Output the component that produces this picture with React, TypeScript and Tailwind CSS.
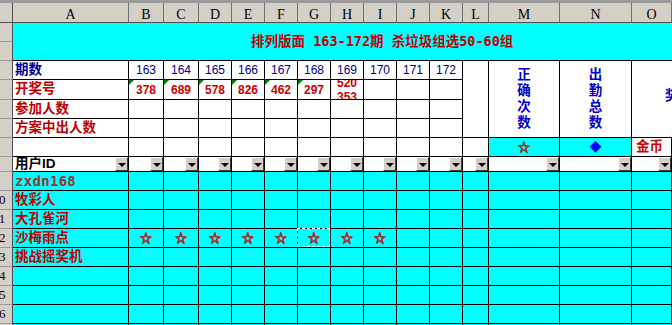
import React from 'react';

const COLS = ['A', 'B', 'C', 'D', 'E', 'F', 'G', 'H', 'I', 'J', 'K', 'L', 'M', 'N', 'O', 'P'];
const NUMS = ['163', '164', '165', '166', '167', '168', '169', '170', '171', '172'];
const OPEN = ['378', '689', '578', '826', '462', '297'];
const NAMES: { name: string; latin?: boolean }[] = [
  { name: 'zxdn168', latin: true },
  { name: '牧彩人' },
  { name: '大孔雀河' },
  { name: '沙梅雨点' },
  { name: '挑战摇奖机' },
  { name: '' },
  { name: '' },
  { name: '' },
  { name: '' },
];

function RowHead({ n }: { n: number }) {
  return (
    <div className="bg-[#d4d0c8] border-r border-b border-r-[#505050] border-b-[#9a9a9a] overflow-hidden">
      {n >= 10 && (
        <div className="w-[26px] -ml-[14px] h-full flex items-center justify-center font-['Liberation_Serif',serif] text-[13px] text-black">
          {n}
        </div>
      )}
    </div>
  );
}

function Cell({ className = '', children }: { className?: string; children?: React.ReactNode }) {
  return <div className={`border-r border-b border-black overflow-hidden min-w-0 relative ${className}`}>{children}</div>;
}

function DropBtn() {
  return (
    <div className="w-[13px] h-[14px] bg-[#d4d0c8] border border-t-white border-l-white border-r-[#404040] border-b-[#404040] flex items-center justify-center shrink-0">
      <div className="w-0 h-0 border-l-[4px] border-r-[4px] border-t-[4px] border-l-transparent border-r-transparent border-t-black mt-[1px]" />
    </div>
  );
}

const label = "pl-[2px] flex items-center text-[13.5px] font-bold whitespace-nowrap";

export default function App() {
  return (
    <div className="w-[672px] h-[325px] overflow-hidden bg-white font-['Liberation_Sans','Noto_Sans_CJK_SC',sans-serif]">
      <div className="h-[3px] bg-[#9a9a9a]" />
      <div className="grid w-max grid-cols-[13px_116px_35px_35px_33px_33px_33px_33px_33px_33px_33px_33px_26px_71px_72px_40px_60px] grid-rows-[20px_19px_19px_19px_20px_19px_19px_19px_15px_19px_19px_19px_19px_19px_19px_19px_19px_19px]">
        {/* header row */}
        <div className="bg-[#d4d0c8] border-r border-b border-r-[#505050] border-b-[#505050]" />
        {COLS.map((c) => (
          <div
            key={c}
            className="bg-[#d4d0c8] border-r border-b border-r-[#707070] border-b-[#505050] overflow-hidden text-center pt-[4px] leading-[16px] text-[14px] text-black font-['Liberation_Serif',serif]"
          >
            {c}
          </div>
        ))}

        {/* rows 1-2: title */}
        <RowHead n={1} />
        <div className="col-span-16 row-span-2 bg-[#00ffff] border-b border-r border-black flex items-center pl-[238px] whitespace-pre text-[13.5px] font-bold text-[#c00000] font-['DejaVu_Sans_Mono','Noto_Sans_CJK_SC',monospace]">
          {'排列版面 163-172期 杀垃圾组选50-60组'}
        </div>
        <RowHead n={2} />

        {/* row 3 */}
        <RowHead n={3} />
        <Cell className={`${label} text-[#000099]`}>期数</Cell>
        {NUMS.map((n) => (
          <Cell key={n} className="flex items-center justify-center text-[12px] text-[#000080]">
            {n}
          </Cell>
        ))}
        <Cell className="row-span-4" />
        <Cell className="row-span-4 flex items-center justify-center">
          <div className="w-[14px] text-center text-[13.5px] leading-[16px] font-bold text-[#0000cc] break-all">正确次数</div>
        </Cell>
        <Cell className="row-span-4 flex items-center justify-center">
          <div className="w-[14px] text-center text-[13.5px] leading-[16px] font-bold text-[#0000cc] break-all">出勤总数</div>
        </Cell>
        <Cell className="col-span-2 row-span-4 flex items-center pl-[33px] pb-[6px] whitespace-nowrap text-[13.5px] font-bold text-[#0000cc]">
          奖金币数
        </Cell>

        {/* row 4 */}
        <RowHead n={4} />
        <Cell className={`${label} text-[#c00000]`}>开奖号</Cell>
        {OPEN.map((n) => (
          <Cell key={n} className="flex items-center justify-center text-[12px] font-bold text-[#cc0000] pt-[1px]">
            <div className="absolute left-0 top-0 w-0 h-0 border-t-[5px] border-r-[5px] border-t-[#008000] border-r-transparent" />
            {n}
          </Cell>
        ))}
        <Cell className="flex flex-col items-center justify-center text-[12px] leading-[14px] font-bold text-[#cc0000]">
          <div>520</div>
          <div>353</div>
        </Cell>
        <Cell />
        <Cell />
        <Cell />

        {/* row 5 */}
        <RowHead n={5} />
        <Cell className={`${label} text-[#c00000]`}>参加人数</Cell>
        {NUMS.map((n) => (
          <Cell key={n} />
        ))}

        {/* row 6 */}
        <RowHead n={6} />
        <Cell className={`${label} text-[#c00000]`}>方案中出人数</Cell>
        {NUMS.map((n) => (
          <Cell key={n} />
        ))}

        {/* row 7 */}
        <RowHead n={7} />
        {COLS.slice(0, 12).map((c) => (
          <Cell key={c} />
        ))}
        <Cell className="bg-[#00ffff] flex items-center justify-center text-[12px] font-bold text-[#a33030] font-['Noto_Sans_CJK_SC',sans-serif] [-webkit-text-stroke:0.9px_#a33030]">
          ☆
        </Cell>
        <Cell className="bg-[#00ffff] flex items-center justify-center text-[12px] text-[#0000ff] font-['Noto_Sans_CJK_SC',sans-serif]">
          ◆
        </Cell>
        <Cell className="flex items-center pl-[4px] text-[13.5px] font-bold text-[#cc0000] whitespace-nowrap">金币</Cell>
        <Cell />

        {/* row 8 */}
        <RowHead n={8} />
        <Cell className="flex items-stretch justify-between">
          <div className="pl-[2px] flex items-center text-[13.5px] font-bold text-black whitespace-nowrap">用户ID</div>
          <DropBtn />
        </Cell>
        {COLS.slice(1).map((c) => (
          <Cell key={c} className="flex items-stretch justify-end">
            <DropBtn />
          </Cell>
        ))}

        {/* rows 9-17 */}
        {NAMES.map((row, i) => {
          const r = 9 + i;
          return (
            <React.Fragment key={r}>
              <RowHead n={r} />
              <Cell
                className={`bg-[#00ffff] ${label} ${
                  row.latin
                    ? "font-['DejaVu_Sans_Mono',monospace] text-[14px] tracking-[0.3px] text-[#a03030]"
                    : 'text-[#c00000]'
                }`}
              >
                {row.name}
              </Cell>
              {COLS.slice(1).map((c, j) => {
                const star = r === 12 && j <= 7;
                const marquee = r === 12 && c === 'G';
                return (
                  <div
                    key={c}
                    className={`border-r border-b border-black min-w-0 relative bg-[#00ffff] flex items-center justify-center ${
                      marquee ? '' : 'overflow-hidden'
                    }`}
                  >
                    {star && (
                      <span className="text-[12px] font-bold text-[#b02828] font-['Noto_Sans_CJK_SC',sans-serif] [-webkit-text-stroke:0.9px_#b02828]">
                        ☆
                      </span>
                    )}
                    {marquee && (
                      <div className="absolute -left-[1px] -top-[1px] right-0 bottom-0 border border-dashed border-white z-10" />
                    )}
                  </div>
                );
              })}
            </React.Fragment>
          );
        })}
      </div>
    </div>
  );
}
